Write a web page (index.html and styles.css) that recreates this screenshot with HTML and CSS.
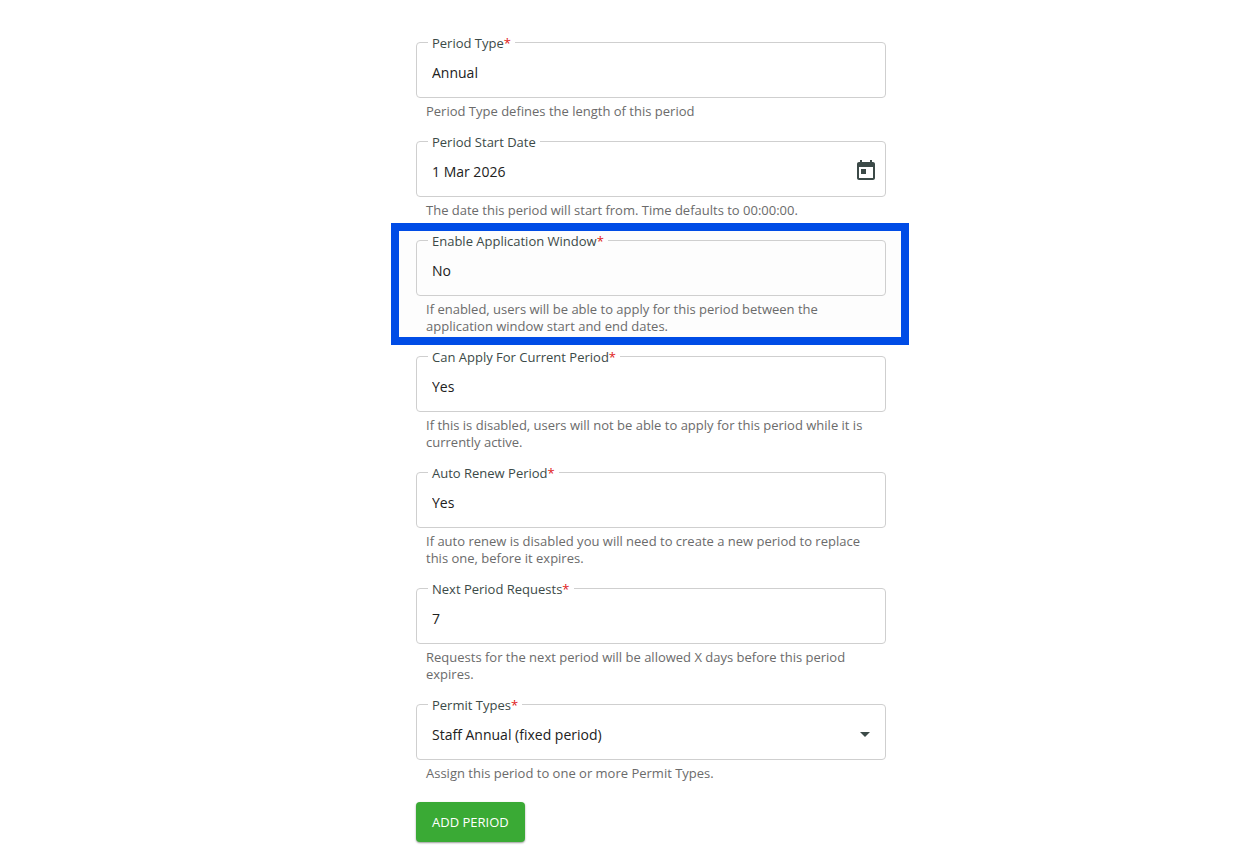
FILE: index.html
```
<!DOCTYPE html>
<html lang="en">

<head>
    <meta charset="UTF-8">
    <meta name="viewport" content="width=device-width, initial-scale=1.0">
    <title>Add Period</title>
    <link rel="stylesheet" href="styles.css">
</head>

<body>

    <form class="period-form">
        <div class="field">
            <fieldset class="field-box">
                <legend><label for="periodType">Period Type<span class="required">*</span></label></legend>
                <select id="periodType" aria-describedby="periodTypeHelp">
                    <option>Annual</option>
                </select>
            </fieldset>
            <p class="help" id="periodTypeHelp">Period Type defines the length of this period</p>
        </div>

        <div class="field">
            <fieldset class="field-box">
                <legend><label for="startDate">Period Start Date</label></legend>
                <input type="text" id="startDate" value="1 Mar 2026" aria-describedby="startDateHelp">
                <button type="button" class="date-btn" aria-label="Choose date">
                    <svg width="24" height="24" viewBox="0 0 24 24" fill="currentColor">
                        <path d="M19 4h-1V2h-2v2H8V2H6v2H5c-1.1 0-2 .9-2 2v14c0 1.1.9 2 2 2h14c1.1 0 2-.9 2-2V6c0-1.1-.9-2-2-2zm0 16H5V9h14v11zM7 11h5v5H7z" />
                    </svg>
                </button>
            </fieldset>
            <p class="help" id="startDateHelp">The date this period will start from. Time defaults to 00:00:00.</p>
        </div>

        <div class="field highlight">
            <fieldset class="field-box">
                <legend><label for="appWindow">Enable Application Window<span class="required">*</span></label></legend>
                <select id="appWindow" aria-describedby="appWindowHelp">
                    <option>No</option>
                    <option>Yes</option>
                </select>
            </fieldset>
            <p class="help" id="appWindowHelp">If enabled, users will be able to apply for this period between the application window start and end dates.</p>
        </div>

        <div class="field">
            <fieldset class="field-box">
                <legend><label for="applyCurrent">Can Apply For Current Period<span class="required">*</span></label></legend>
                <select id="applyCurrent" aria-describedby="applyCurrentHelp">
                    <option>Yes</option>
                    <option>No</option>
                </select>
            </fieldset>
            <p class="help" id="applyCurrentHelp">If this is disabled, users will not be able to apply for this period while it is currently active.</p>
        </div>

        <div class="field">
            <fieldset class="field-box">
                <legend><label for="autoRenew">Auto Renew Period<span class="required">*</span></label></legend>
                <select id="autoRenew" aria-describedby="autoRenewHelp">
                    <option>Yes</option>
                    <option>No</option>
                </select>
            </fieldset>
            <p class="help" id="autoRenewHelp">If auto renew is disabled you will need to create a new period to replace this one, before it expires.</p>
        </div>

        <div class="field">
            <fieldset class="field-box">
                <legend><label for="nextRequests">Next Period Requests<span class="required">*</span></label></legend>
                <input type="text" inputmode="numeric" id="nextRequests" value="7" aria-describedby="nextRequestsHelp">
            </fieldset>
            <p class="help" id="nextRequestsHelp">Requests for the next period will be allowed X days before this period expires.</p>
        </div>

        <div class="field">
            <fieldset class="field-box">
                <legend><label for="permitTypes">Permit Types<span class="required">*</span></label></legend>
                <select id="permitTypes" aria-describedby="permitTypesHelp">
                    <option>Staff Annual (fixed period)</option>
                </select>
                <svg class="arrow" width="10" height="5" viewBox="0 0 10 5" aria-hidden="true">
                    <path d="M0 0h10L5 5z" fill="currentColor" />
                </svg>
            </fieldset>
            <p class="help" id="permitTypesHelp">Assign this period to one or more Permit Types.</p>
        </div>

        <button type="submit" class="submit-btn">ADD PERIOD</button>
    </form>

</body>

</html>
```
FILE: styles.css
```
* {
    box-sizing: border-box;
}

body {
    margin: 0;
    padding-left: 47px;
    background-color: #fff;
    color: #212121;
    font-family: "Open Sans", sans-serif;
    font-size: 13px;
}

.period-form {
    width: 90%;
    max-width: 470px;
    margin: 0 auto;
    padding: 33px 0 12px;
}

.field {
    position: relative;
    margin-bottom: 8px;
}

.field-box {
    position: relative;
    min-width: 0;
    margin: 0;
    padding: 0;
    border: 1px solid #cfcfcf;
    border-radius: 4px;
}

legend {
    margin-left: 11px;
    padding: 2px 4px 0;
    color: #3c4a48;
    line-height: 16px;
}

.required {
    color: #e02020;
}

input,
select {
    display: block;
    width: 100%;
    height: 46px;
    padding: 0 48px 4px 15px;
    border: none;
    background: none;
    color: #212121;
    font: inherit;
    font-size: 14px;
    appearance: none;
}

.help {
    margin: 0;
    padding: 5px 10px 4px;
    color: #6b6b6b;
    line-height: 17px;
}

.date-btn {
    position: absolute;
    top: 8px;
    right: 7px;
    width: 24px;
    height: 24px;
    padding: 0;
    border: none;
    background: none;
    color: #3c4a48;
    cursor: pointer;
}

.arrow {
    position: absolute;
    top: 19px;
    right: 15px;
    color: #3c4a48;
    pointer-events: none;
}

/* blue frame around the field */
.highlight::before {
    content: "";
    position: absolute;
    z-index: -1;
    inset: -8px -23px -6px -25px;
    border: 8px solid #004ce6;
    background-color: #fdfdfd;
}

.submit-btn {
    height: 40px;
    margin-top: 8px;
    padding: 0 16px;
    border: none;
    border-radius: 4px;
    background-color: #3aaa35;
    box-shadow: 0 1px 2px rgba(0, 0, 0, 0.4);
    color: #fff;
    font: inherit;
    font-weight: 500;
    cursor: pointer;
}
```
